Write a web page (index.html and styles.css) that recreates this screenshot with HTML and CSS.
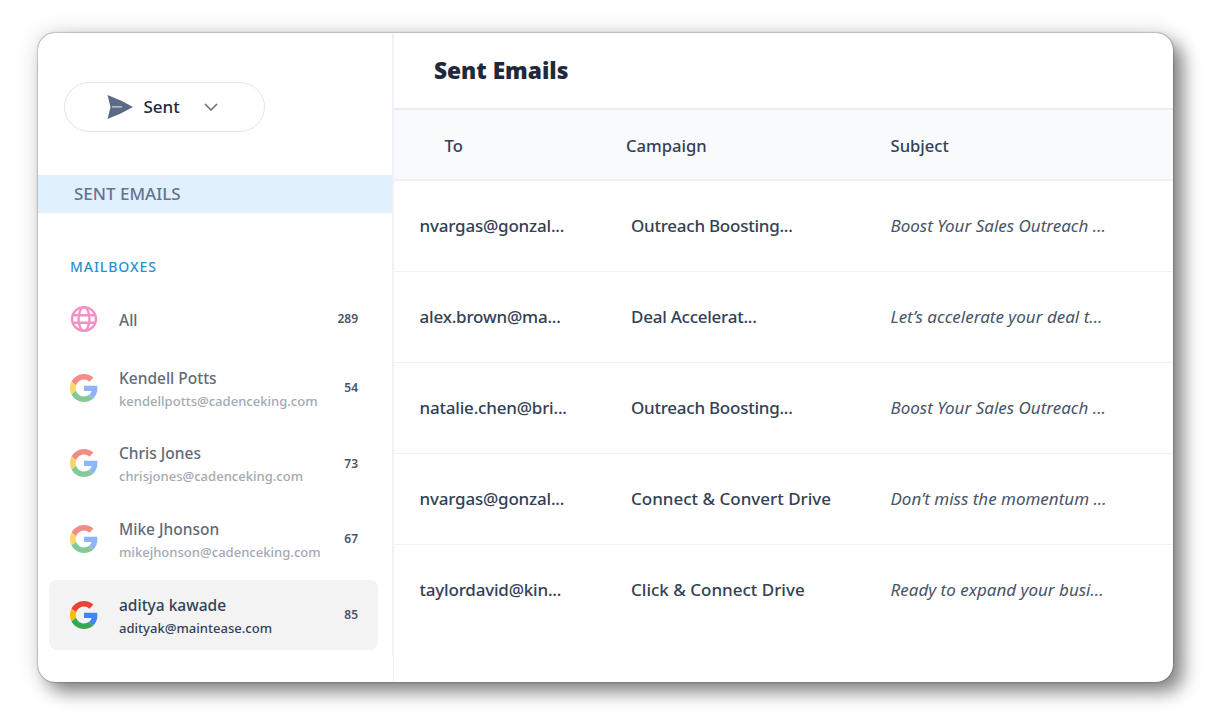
FILE: index.html
```html
<!DOCTYPE html>
<html lang="en">
<head>
<meta charset="utf-8">
<title>Sent Emails</title>
<link rel="stylesheet" href="styles.css">
</head>
<body>
<svg class="defs" width="0" height="0" aria-hidden="true">
  <symbol id="g" viewBox="0 0 48 48">
    <path fill="#EA4335" d="M24 9.5c3.54 0 6.71 1.22 9.21 3.6l6.85-6.85C35.9 2.38 30.47 0 24 0 14.62 0 6.51 5.38 2.56 13.22l7.98 6.19C12.43 13.72 17.74 9.5 24 9.5z"/>
    <path fill="#4285F4" d="M46.98 24.55c0-1.57-.15-3.09-.38-4.55H24v9.02h12.94c-.58 2.96-2.26 5.48-4.78 7.18l7.73 6c4.51-4.18 7.09-10.36 7.09-17.65z"/>
    <path fill="#FBBC05" d="M10.53 28.59c-.48-1.45-.76-2.99-.76-4.59s.27-3.14.76-4.59l-7.98-6.19C.92 16.46 0 20.12 0 24c0 3.88.92 7.54 2.56 10.78l7.97-6.19z"/>
    <path fill="#34A853" d="M24 48c6.48 0 11.93-2.13 15.89-5.81l-7.73-6c-2.15 1.45-4.92 2.3-8.16 2.3-6.26 0-11.57-4.22-13.47-9.91l-7.98 6.19C6.51 42.62 14.62 48 24 48z"/>
  </symbol>
</svg>
<div class="card">
  <aside class="sidebar">
    <div class="sent-wrap">
      <button class="sent-btn" type="button">
        <svg class="plane" viewBox="0 0 26 24" width="26" height="24"><path fill="#5b6b85" d="M0.5 0 Q14 5 26 12 Q14 19 0.5 24 L3.5 12 Z"/><path d="M5 11.9 H15" stroke="#fff" stroke-width=".9"/></svg>
        <span class="sent-label">Sent</span>
        <svg class="chev" viewBox="0 0 14 8" width="14" height="8"><path d="M1 1 L7 7 L13 1" fill="none" stroke="#64748b" stroke-width="1.6"/></svg>
      </button>
    </div>
    <div class="nav-active">SENT EMAILS</div>
    <div class="section-title">MAILBOXES</div>
    <ul class="boxes">
      <li class="box box-all">
        <svg class="ico" viewBox="0 0 24 24" width="26" height="26" fill="none" stroke="#f58fc5" stroke-width="2.2"><circle cx="12" cy="12" r="11"/><ellipse cx="12" cy="12" rx="5" ry="11"/><path d="M1.5 8.5h21M1.5 15.5h21"/></svg>
        <div class="box-text"><div class="box-name">All</div></div>
        <span class="count">289</span>
      </li>
      <li class="box">
        <svg class="ico pale" width="28" height="28"><use href="#g"/></svg>
        <div class="box-text"><div class="box-name">Kendell Potts</div><div class="box-mail">kendellpotts@cadenceking.com</div></div>
        <span class="count">54</span>
      </li>
      <li class="box">
        <svg class="ico pale" width="28" height="28"><use href="#g"/></svg>
        <div class="box-text"><div class="box-name">Chris Jones</div><div class="box-mail">chrisjones@cadenceking.com</div></div>
        <span class="count">73</span>
      </li>
      <li class="box">
        <svg class="ico pale" width="28" height="28"><use href="#g"/></svg>
        <div class="box-text"><div class="box-name">Mike Jhonson</div><div class="box-mail">mikejhonson@cadenceking.com</div></div>
        <span class="count">67</span>
      </li>
      <li class="box box-on">
        <svg class="ico" width="28" height="28"><use href="#g"/></svg>
        <div class="box-text"><div class="box-name">aditya kawade</div><div class="box-mail">adityak@maintease.com</div></div>
        <span class="count">85</span>
      </li>
    </ul>
  </aside>
  <main class="main">
    <header class="main-head"><h1>Sent Emails</h1></header>
    <div class="row thead">
      <div class="c1">To</div><div class="c2">Campaign</div><div class="c3">Subject</div>
    </div>
    <div class="row">
      <div class="c1">nvargas@gonzal...</div><div class="c2 trunc">Outreach Boosting...</div><div class="c3">Boost Your Sales Outreach ...</div>
    </div>
    <div class="row">
      <div class="c1">alex.brown@ma...</div><div class="c2 trunc">Deal Accelerat...</div><div class="c3">Let’s accelerate your deal t...</div>
    </div>
    <div class="row">
      <div class="c1">natalie.chen@bri...</div><div class="c2 trunc">Outreach Boosting...</div><div class="c3">Boost Your Sales Outreach ...</div>
    </div>
    <div class="row">
      <div class="c1">nvargas@gonzal...</div><div class="c2">Connect &amp; Convert Drive</div><div class="c3">Don’t miss the momentum ...</div>
    </div>
    <div class="row row-last">
      <div class="c1">taylordavid@kin...</div><div class="c2">Click &amp; Connect Drive</div><div class="c3">Ready to expand your busi...</div>
    </div>
  </main>
</div>
</body>
</html>
```
FILE: styles.css
```css
* { box-sizing: border-box; }
html, body { margin: 0; height: 100%; }
body {
  background: #fff;
  padding: 33px 38px;
  font-family: "Noto Sans", "Open Sans", sans-serif;
  color: #1e293b;
  overflow: hidden;
}
.defs { display: block; height: 0; }
.card {
  width: 1135px;
  height: 649px;
  display: flex;
  background: #fff;
  border-radius: 17px;
  overflow: hidden;
  box-shadow: 0 0 1.5px rgba(0,0,0,.75), 10px 10px 18px 0 rgba(0,0,0,.45), 0 0 24px rgba(0,0,0,.14);
}
.sidebar {
  width: 355px; height: 622px; flex: none;
  display: flex; flex-direction: column;
  border-right: 1px solid #eef1f8;
}
.sidebar > * { flex: none; }
.sent-wrap { padding: 48.5px 0 0 26px; height: 142px; }
.sent-btn {
  width: 200.5px; height: 50px;
  display: flex; align-items: center;
  padding: 0 0 0 41.5px;
  background: #fff;
  border: 1.5px solid #dfe5ee;
  border-radius: 25px;
  font: inherit;
  color: #1e293b;
}
.plane { flex: none; margin-right: 11px; }
.sent-label { font-size: 17px; font-weight: 500; width: 60px; text-align: left; }
.chev { flex: none; }
.nav-active {
  height: 38px; line-height: 38px;
  padding-left: 36px;
  background: #e0f1fd;
  color: #64748b;
  font-size: 17px; font-weight: 500;
}
.section-title {
  margin: 44px 0 0 32px;
  color: #1f93d6;
  font-size: 14px; font-weight: 500; letter-spacing: .95px;
  line-height: 20px;
}
.boxes { list-style: none; margin: 18.5px 0 0; padding: 0 14px 0 11px; }
.box {
  height: 70px; margin-bottom: 5.7px;
  display: flex; align-items: center;
  padding: 0 20px 0 21px;
  border-radius: 8px;
  color: #5f6b7a;
}
.box-all { height: 46px; margin-bottom: 11px; }
.box-on { background: #f3f3f4; color: #334155; margin-bottom: 0; }
.ico { flex: none; width: 28px; margin-right: 21px; }
.pale { opacity: .6; }
.box-text { flex: 1; min-width: 0; padding-top: 2px; }
.box-name { font-size: 15.5px; font-weight: 500; line-height: 22px; }
.box-mail { font-size: 13.05px; line-height: 20px; margin-top: 2px; color: #a4a9b3; font-weight: 500; }
.box-on .box-mail { color: #334155; }
.count { font-size: 12px; font-weight: 600; color: #475569; }
.main { flex: 1; border-left: 1px solid #eef1f8; min-width: 0; }
.main-head { height: 77px; padding-left: 40px; display: flex; align-items: center; border-bottom: 2px solid #e8edf5; }
.main-head h1 { margin: 0; font-size: 22.7px; font-weight: 900; color: #1e293b; }
.row {
  display: grid;
  grid-template-columns: 232px 264.5px 1fr;
  align-items: center;
  height: 91px;
  padding-bottom: 2px;
  border-bottom: 1px solid #eef1f6;
  font-size: 17px;
  font-weight: 500;
  color: #334155;
}
.c1 { padding-left: 25.5px; letter-spacing: -.2px; }
.c2 { padding-left: 5px; }
.trunc { letter-spacing: -.25px; }
.c3 { font-style: italic; font-weight: 400; color: #475569; }
.thead {
  height: 71px; padding: 2px 0 0;
  background: #f8fafc;
  border-bottom: 2px solid #eef1f6;
  font-size: 16.6px;
}
.thead .c1 { padding-left: 50.5px; letter-spacing: 0; }
.thead .c2 { padding-left: 0; }
.thead .c3 { font-style: normal; font-weight: 500; color: #334155; }
.row-last { border-bottom: 0; }
```
